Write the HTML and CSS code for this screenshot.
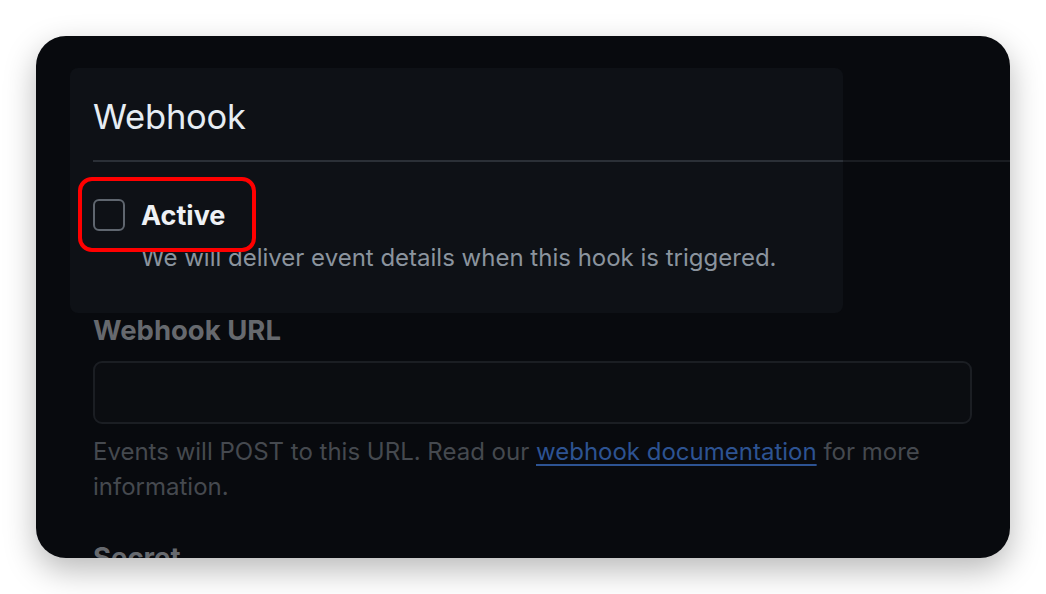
FILE: index.html
```html
<!DOCTYPE html>
<html lang="en">
<head>
<meta charset="utf-8">
<title>Webhook</title>
<link rel="stylesheet" href="styles.css">
</head>
<body>
<div class="frame">
  <section class="panel">
    <h2 class="title">Webhook</h2>
    <div class="divider"></div>
    <div class="option">
      <div class="highlight">
        <span class="checkbox"></span>
        <span class="option-label">Active</span>
      </div>
      <p class="option-note">We will deliver event details when this hook is triggered.</p>
    </div>
  </section>
  <div class="form">
    <label class="field-label">Webhook URL</label>
    <div class="input"></div>
    <p class="field-note">Events will POST to this URL. Read our <a class="link" href="#">webhook documentation</a> for more information.</p>
    <label class="field-label secret">Secret</label>
  </div>
</div>
</body>
</html>
```

FILE: styles.css
```css
* { box-sizing: border-box; }
html, body { margin: 0; padding: 0; background: #ffffff; }
body {
  font-family: Inter, "Noto Sans", "Liberation Sans", sans-serif;
  height: 594px;
  overflow: hidden;
}
.frame {
  margin: 36px 36px 0 36px;
  height: 522px;
  border-radius: 30px;
  background: #080a0e;
  box-shadow: 0 12px 32px rgba(0, 0, 0, 0.28);
  overflow: hidden;
  padding-top: 32px;
}
.panel {
  margin-left: 34px;
  width: 773px;
  height: 245px;
  background: #0e1116;
  border-radius: 8px;
  padding: 0 0 0 23px;
  overflow: visible;
}
.title {
  margin: 0;
  padding-top: 28px;
  font-size: 34.5px;
  font-weight: 400;
  line-height: 42px;
  color: #e6edf3;
  letter-spacing: -0.2px;
}
.divider {
  margin-top: 22px;
  width: 917px;
  height: 2px;
  background: linear-gradient(to right, #2b3037 0, #2b3037 750px, #1a1d22 750px);
}
.option {
  margin-top: 36px;
  position: relative;
}
.highlight {
  display: flex;
  align-items: center;
  gap: 16px;
  height: 34px;
}
.highlight::before {
  content: "";
  position: absolute;
  left: -15px;
  top: -21px;
  width: 170px;
  height: 67px;
  border: 4px solid #ff0000;
  border-radius: 14px;
}
.checkbox {
  width: 32px;
  height: 32px;
  border: 2px solid #5f666f;
  border-radius: 6px;
  flex: none;
}
.option-label {
  font-size: 27px;
  font-weight: 700;
  color: #eef1f5;
}
.option-note {
  margin: 9px 0 0 48px;
  font-size: 24px;
  line-height: 34px;
  color: #8b949e;
}
.form {
  padding-left: 57px;
  padding-right: 38px;
}
.field-label {
  display: block;
  margin-top: 2px;
  font-size: 27.5px;
  font-weight: 700;
  line-height: 30px;
  color: #66696e;
}
.input {
  margin-top: 16px;
  height: 63px;
  border: 2px solid #1b1e23;
  border-radius: 9px;
  background: #0b0d11;
}
.field-note {
  margin: 10px 0 0 0;
  font-size: 24px;
  line-height: 35px;
  color: #45494f;
}
.link {
  color: #2d5392;
  text-decoration: underline;
  text-underline-offset: 4px;
  text-decoration-thickness: 2px;
}
.secret {
  margin-top: 38px;
}
```
